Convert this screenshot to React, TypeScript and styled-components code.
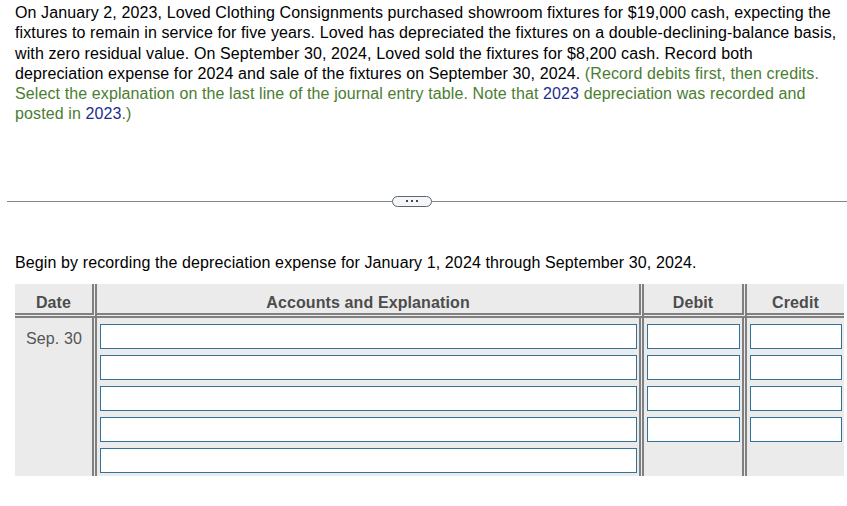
import React from "react";
import styled, { createGlobalStyle } from "styled-components";

const Global = createGlobalStyle`
  html, body { margin: 0; padding: 0; background: #ffffff; }
  body { font-family: "Liberation Sans", Arial, sans-serif; }
  * { box-sizing: border-box; }
`;

const Page = styled.div`
  width: 847px;
  padding-top: 3px;
  font-family: "Liberation Sans", Arial, sans-serif;
  font-size: 16px;
  letter-spacing: 0.11px;
  color: #000;
`;

const Problem = styled.p`
  margin: 0 0 0 15px;
  width: 822px;
  line-height: 20.3px;
`;

const Note = styled.span`
  color: #4b7d31;
`;

const Num = styled.span`
  color: #1c2e8f;
`;

const Divider = styled.div`
  display: flex;
  align-items: center;
  margin-top: 71px;
  padding-left: 7px;
  height: 11px;
`;

const Rule = styled.div<{ $grow?: boolean }>`
  height: 1px;
  background: #7e8892;
  flex: ${(p) => (p.$grow ? "1 1 auto" : "0 0 385px")};
`;

const Pill = styled.button`
  flex: 0 0 40px;
  height: 11px;
  padding: 0;
  border: 1px solid #5b6570;
  border-radius: 6px;
  background: #f4f6f8;
  display: flex;
  align-items: center;
  justify-content: center;
  gap: 3px;
`;

const Dot = styled.span`
  width: 2px;
  height: 2px;
  background: #3d4650;
  display: block;
`;

const Lead = styled.p`
  margin: 46px 0 0 15px;
  line-height: 20px;
`;

const Journal = styled.div`
  margin: 11px 0 0 15px;
  width: 829px;
  display: grid;
  grid-template-columns: 82px 547px 103px 97px;
  background: #ebebeb;
`;

const HeadCell = styled.div<{ $last?: boolean }>`
  height: 34px;
  padding: 10px 2px 0;
  border-bottom: 5px double #808080;
  border-right: ${(p) => (p.$last ? "none" : "5px double #808080")};
  text-align: center;
  font-weight: bold;
  color: #4d4d4d;
  line-height: 18px;
`;

const BodyCell = styled.div<{ $last?: boolean }>`
  display: flex;
  flex-direction: column;
  gap: 6px;
  padding: 6px 2px 3px 3px;
  border-right: ${(p) => (p.$last ? "none" : "5px double #808080")};
`;

const DateText = styled.div`
  padding-top: 6px;
  text-align: center;
  color: #555555;
  line-height: 18px;
`;

const Field = styled.input`
  display: block;
  width: 100%;
  height: 25px;
  margin: 0;
  padding: 0 4px;
  border: 1px solid #31729b;
  border-radius: 0;
  background: #ffffff;
  font-family: "Liberation Sans", Arial, sans-serif;
  font-size: 15px;
  outline: none;
`;

export default function App() {
  const acct = [0, 1, 2, 3, 4];
  const amt = [0, 1, 2, 3];
  return (
    <>
      <Global />
      <Page>
        <Problem>
          On January 2, 2023, Loved Clothing Consignments purchased showroom fixtures for $19,000 cash,
          expecting the fixtures to remain in service for five years. Loved has depreciated the fixtures
          on a double-declining-balance basis, with zero residual value. On September 30, 2024, Loved
          sold the fixtures for $8,200 cash. Record both depreciation expense for 2024 and sale of the
          fixtures on September 30, 2024.{" "}
          <Note>
            (Record debits first, then credits. Select the explanation on the last line of the journal
            entry table. Note that <Num>2023</Num> depreciation was recorded and posted in{" "}
            <Num>2023</Num>.)
          </Note>
        </Problem>
        <Divider>
          <Rule />
          <Pill type="button" aria-label="more">
            <Dot />
            <Dot />
            <Dot />
          </Pill>
          <Rule $grow />
        </Divider>
        <Lead>Begin by recording the depreciation expense for January 1, 2024 through September 30, 2024.</Lead>
        <Journal>
          <HeadCell>Date</HeadCell>
          <HeadCell>Accounts and Explanation</HeadCell>
          <HeadCell>Debit</HeadCell>
          <HeadCell $last>Credit</HeadCell>
          <BodyCell>
            <DateText>Sep. 30</DateText>
          </BodyCell>
          <BodyCell>
            {acct.map((i) => (
              <Field key={i} type="text" />
            ))}
          </BodyCell>
          <BodyCell>
            {amt.map((i) => (
              <Field key={i} type="text" />
            ))}
          </BodyCell>
          <BodyCell $last>
            {amt.map((i) => (
              <Field key={i} type="text" />
            ))}
          </BodyCell>
        </Journal>
      </Page>
    </>
  );
}
